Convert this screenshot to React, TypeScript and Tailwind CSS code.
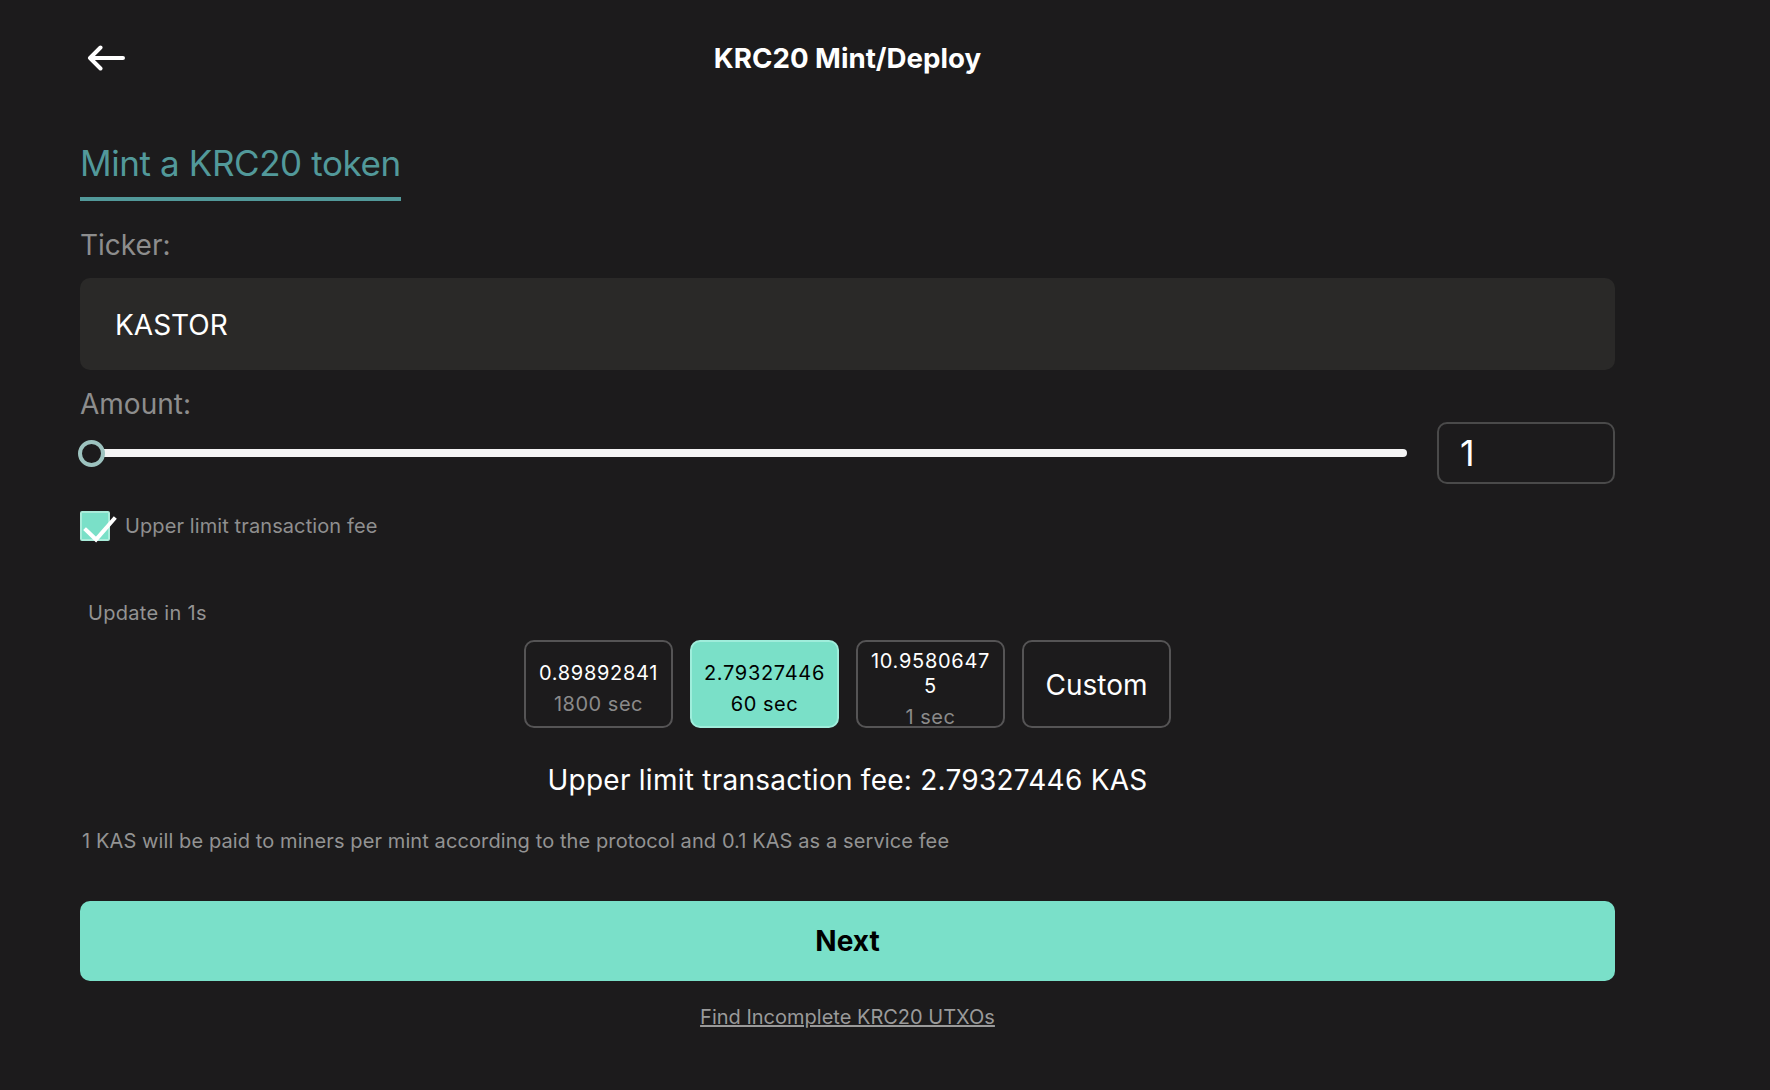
import React from "react";

function FeeOption({
  value,
  time,
  selected,
}: {
  value: React.ReactNode;
  time: string;
  selected?: boolean;
}) {
  return (
    <button
      className={
        selected
          ? "flex h-[88px] w-[149px] flex-col items-center justify-center rounded-[10px] border-2 border-[#9feddb] bg-[#7ae0c8] pt-[10px] text-black"
          : "flex h-[88px] w-[149px] flex-col items-center justify-center rounded-[10px] border-2 border-[#555455] bg-transparent pt-[10px] text-white"
      }
    >
      <span className="text-[20px] leading-[25px] tracking-[0.7px]">{value}</span>
      <span
        className={
          selected
            ? "mt-[6px] text-[20px] leading-[25px] tracking-[0.5px] text-black"
            : "mt-[6px] text-[20px] leading-[25px] tracking-[0.5px] text-[#8a8a8a]"
        }
      >
        {time}
      </span>
    </button>
  );
}

export default function App() {
  return (
    <div className="min-h-screen w-full bg-[#1c1b1c] font-['Inter','Noto_Sans',sans-serif] text-white">
      <div className="w-[1615px] pb-[60px] pl-[80px]">
        <header className="grid h-[116px] grid-cols-[1fr_auto_1fr] items-center">
          <button className="ml-[7px] w-fit" aria-label="Back">
            <svg width="38" height="26" viewBox="0 0 38 26" fill="none">
              <path
                d="M3 13 H36 M13.5 2.5 L3 13 L13.5 23.5"
                stroke="white"
                strokeWidth="4"
                strokeLinecap="round"
                strokeLinejoin="round"
              />
            </svg>
          </button>
          <h1 className="text-[27.7px] font-bold leading-[36px]">KRC20 Mint/Deploy</h1>
          <div />
        </header>

        <div className="mt-[25px]">
          <h2 className="inline-block border-b-4 border-[#52999a] pb-[12px] text-[35px] leading-[44px] tracking-[-0.4px] text-[#52999a]">
            Mint a KRC20 token
          </h2>
        </div>

        <div className="mt-[27px] text-[28px] leading-[34px] text-[#8d8d8d]">Ticker:</div>
        <div className="mt-[16px] flex h-[92px] items-center rounded-[10px] bg-[#2a2928] pl-[35px] pt-[1px] text-[28px] text-white">
          KASTOR
        </div>

        <div className="mt-[17px] text-[28px] leading-[34px] text-[#8d8d8d]">Amount:</div>
        <div className="mt-[1px] flex h-[62px] items-center gap-[30px]">
          <div className="relative flex h-[27px] flex-1 items-center">
            <div className="ml-[12px] h-[8px] flex-1 rounded-r-full bg-[#f4f4f4]" />
            <div className="absolute left-[-2px] top-0 h-[27px] w-[27px] rounded-full border-4 border-[#9dc3bf] bg-[#1c1b1c]" />
          </div>
          <div className="flex h-[62px] w-[178px] items-center rounded-[10px] border-2 border-[#4a4a4a] pl-[21px] text-[36px] text-white">
            1
          </div>
        </div>

        <div className="mt-[27px] flex h-[30px] items-center">
          <div className="relative h-[30px] w-[30px] rounded-[2px] border-2 border-[#a9ecda] bg-[#7ae0c8]">
            <svg
              className="absolute left-[-2px] top-[-2px]"
              width="38"
              height="34"
              viewBox="0 0 38 34"
              fill="none"
            >
              <path
                d="M6 19 L16 28.5 L34 8"
                stroke="white"
                strokeWidth="4"
                strokeLinecap="square"
              />
            </svg>
          </div>
          <span className="ml-[15px] text-[20px] leading-[30px] tracking-[0.1px] text-[#8f8f8f]">
            Upper limit transaction fee
          </span>
        </div>

        <div className="mt-[58px] pl-[8px] text-[20px] leading-[28px] tracking-[0.3px] text-[#939393]">
          Update in 1s
        </div>

        <div className="mt-[13px] flex justify-center gap-[17px]">
          <FeeOption value="0.89892841" time="1800 sec" />
          <FeeOption value="2.79327446" time="60 sec" selected />
          <FeeOption
            value={
              <>
                10.9580647
                <br />5
              </>
            }
            time="1 sec"
          />
          <button className="flex h-[88px] w-[149px] items-center justify-center rounded-[10px] border-2 border-[#555455] pt-[2px] text-[28px] text-white">
            Custom
          </button>
        </div>

        <div className="mt-[34px] text-center text-[28px] leading-[36px] tracking-[0.25px] text-white">
          Upper limit transaction fee: 2.79327446 KAS
        </div>

        <div className="mt-[29px] pl-[2px] text-[20px] leading-[28px] tracking-[0.1px] text-[#939393]">
          1 KAS will be paid to miners per mint according to the protocol and 0.1 KAS as a service fee
        </div>

        <button className="mt-[46px] flex h-[80px] w-full items-center justify-center rounded-[10px] bg-[#7ae0c9] text-[28px] font-bold text-black">
          Next
        </button>

        <div className="mt-[22px] text-center text-[20px] leading-[28px]">
          <a className="text-[#9a9a9a] underline" href="#">
            Find Incomplete KRC20 UTXOs
          </a>
        </div>
      </div>
    </div>
  );
}
